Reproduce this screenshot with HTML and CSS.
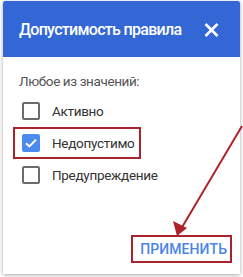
FILE: index.html
```html
<!DOCTYPE html>
<html lang="ru">
<head>
<meta charset="utf-8">
<link rel="stylesheet" href="styles.css">
</head>
<body>
<div class="page">
  <div class="dialog">
    <div class="header">
      <span class="title">Допустимость правила</span>
      <svg class="close" width="15" height="14" viewBox="0 0 15 14"><path d="M1.5 1 L13.5 13 M13.5 1 L1.5 13" stroke="#fff" stroke-width="2.6" fill="none"/></svg>
    </div>
    <div class="body">
      <div class="caption">Любое из значений:</div>
      <div class="row"><span class="box"></span><span class="label">Активно</span></div>
      <div class="row mark"><span class="box checked"><svg width="18" height="18" viewBox="0 0 18 18"><path d="M4 9.2 L7.4 12.4 L14 5.6" stroke="#fff" stroke-width="2" fill="none"/></svg></span><span class="label">Недопустимо</span></div>
      <div class="row"><span class="box"></span><span class="label">Предупреждение</span></div>
    </div>
    <div class="footer">
      <span class="apply">ПРИМЕНИТЬ</span>
    </div>
  </div>
  <svg class="arrow" width="243" height="277" viewBox="0 0 243 277">
    <line x1="242" y1="126" x2="181" y2="229" stroke="#b0222a" stroke-width="2"/>
    <polygon points="177,236 173,221 187,228" fill="#b0222a"/>
  </svg>
</div>
</body>
</html>
```
FILE: styles.css
```css
* { box-sizing: border-box; }
html, body { margin: 0; padding: 0; background: #fff; }
body { font-family: Roboto, "Noto Sans", sans-serif; }
.page { position: relative; width: 243px; height: 277px; overflow: hidden; padding: 1px 0 0 3px; }
.dialog {
  width: 237px;
  height: 273px;
  background: #fff;
  display: flex;
  flex-direction: column;
  box-shadow: 0 1px 4px rgba(0,0,0,0.35);
}
.header {
  height: 56px;
  background: #3367d6;
  display: flex;
  align-items: center;
  padding: 0 21px 0 16px;
  border-radius: 2px 2px 0 0;
}
.title { color: #fff; font-size: 16px; font-weight: 500; letter-spacing: -0.7px; }
.close { display: block; margin-left: auto; margin-top: 1px; }
.body { padding: 14px 0 0 16px; flex: 1; }
.caption { color: #555; font-size: 13.5px; letter-spacing: -0.4px; height: 24px; line-height: 20px; }
.row { display: flex; align-items: center; height: 32px; }
.row.mark {
  width: fit-content;
  margin-left: -6px;
  padding: 0 4px;
  border: 2px solid #a8232b;
  height: 32px;
}
.box {
  width: 18px; height: 18px;
  margin: 0 12px 0 3px;
  border: 2px solid #6b6b6b;
  border-radius: 2px;
  display: flex; align-items: center; justify-content: center;
  flex: none;
}
.box.checked { border: none; background: #4d8af0; }
.box.checked svg { display: block; }
.label { color: #333; font-size: 13.5px; letter-spacing: -0.3px; }
.footer { display: flex; justify-content: flex-end; padding: 0 8px 11px 0; }
.apply {
  border: 2px solid #a8232b;
  height: 28px;
  padding: 0 3px 0 7px;
  display: flex; align-items: center;
  color: #4a84e8;
  font-size: 14px;
  font-weight: 500;
  letter-spacing: 0.1px;
}
.arrow { position: absolute; left: 0; top: 0; pointer-events: none; }
```
